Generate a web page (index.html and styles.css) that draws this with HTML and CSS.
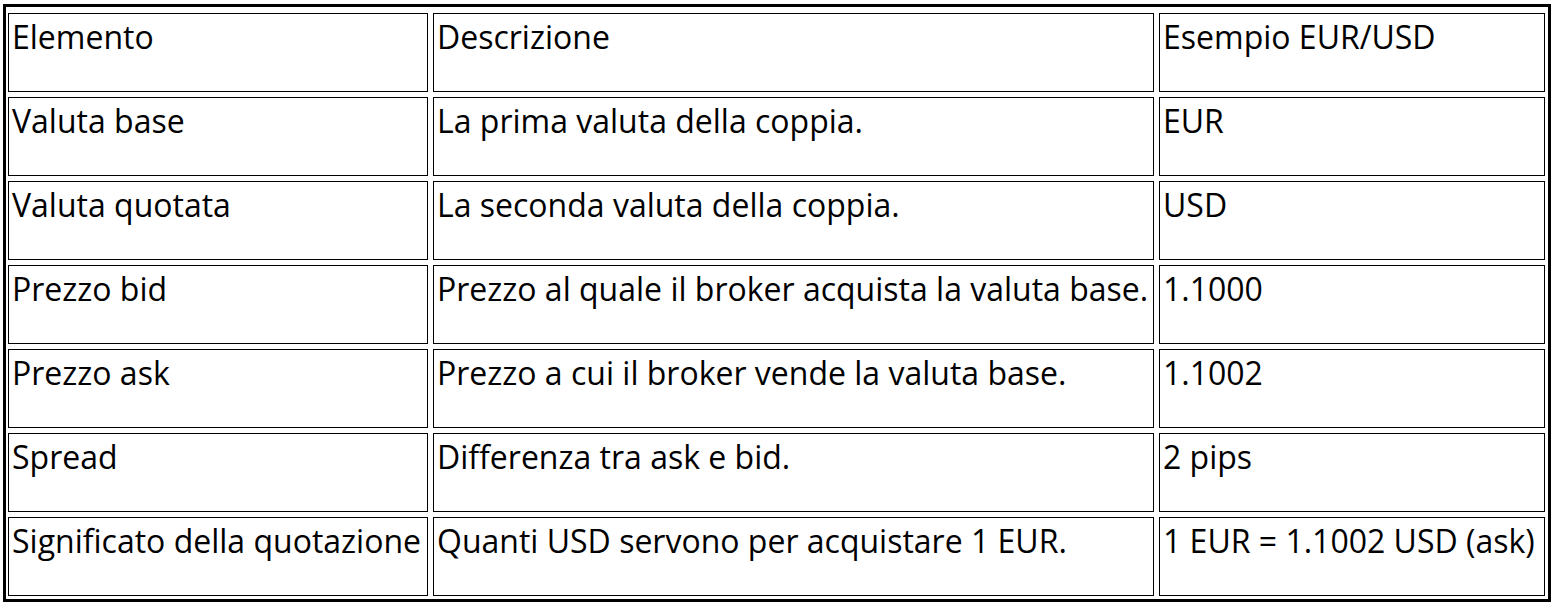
FILE: index.html
```html
<!DOCTYPE html>
<html lang="it">
<head>
<meta charset="utf-8">
<title>Coppia di valute EUR/USD</title>
<link rel="stylesheet" href="styles.css">
</head>
<body>
<div class="frame">
  <table class="quote-table">
    <colgroup>
      <col class="c1">
      <col class="c2">
      <col class="c3">
    </colgroup>
    <tr><td>Elemento</td><td>Descrizione</td><td>Esempio EUR/USD</td></tr>
    <tr><td>Valuta base</td><td>La prima valuta della coppia.</td><td>EUR</td></tr>
    <tr><td>Valuta quotata</td><td>La seconda valuta della coppia.</td><td>USD</td></tr>
    <tr><td>Prezzo bid</td><td>Prezzo al quale il broker acquista la valuta base.</td><td>1.1000</td></tr>
    <tr><td>Prezzo ask</td><td>Prezzo a cui il broker vende la valuta base.</td><td>1.1002</td></tr>
    <tr><td>Spread</td><td>Differenza tra ask e bid.</td><td>2 pips</td></tr>
    <tr><td>Significato della quotazione</td><td>Quanti USD servono per acquistare 1 EUR.</td><td>1 EUR = 1.1002 USD (ask)</td></tr>
  </table>
</div>
</body>
</html>
```

FILE: styles.css
```css
html, body {
  margin: 0;
  padding: 0;
  background: #ffffff;
}

body {
  padding: 4px 0 0 3px;
  font-family: "Open Sans", "Liberation Sans", Arial, sans-serif;
  color: #000;
}

.frame {
  width: 1542px;
  border: 3px solid #000;
}

.quote-table {
  table-layout: fixed;
  width: 1547px;
  margin: 1px -2px -2px -3px;
  border-collapse: separate;
  border-spacing: 5px;
  font-size: 32px;
}

.c1 { width: 420px; }
.c2 { width: 721px; }
.c3 { width: 386px; }

.quote-table td {
  box-sizing: border-box;
  height: 79px;
  border: 1px solid #000;
  padding: 5px 1px 0 3px;
  vertical-align: top;
  white-space: nowrap;
  line-height: 1.15;
}
```
